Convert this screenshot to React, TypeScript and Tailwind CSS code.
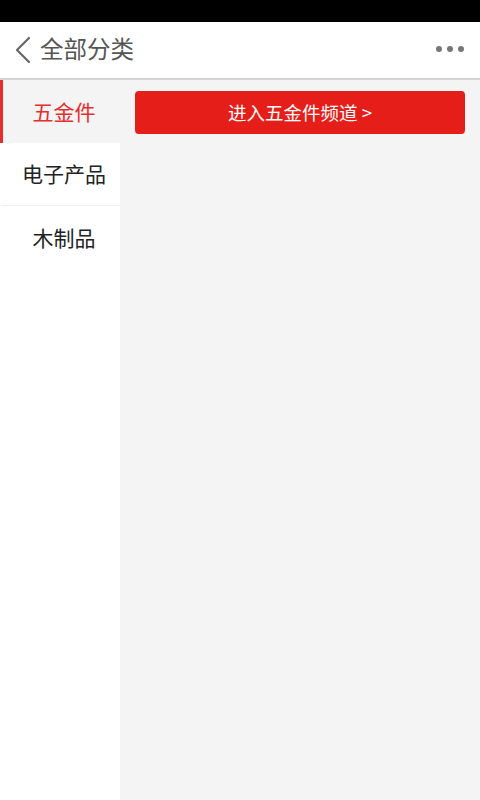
import React, { useState } from 'react';

const categories = ['五金件', '电子产品', '木制品'];

const font = { fontFamily: '"Noto Sans CJK SC", "Noto Sans", sans-serif' };

export default function App() {
    const [active, setActive] = useState(0);

    return (
        <div className="w-[480px] h-[800px] flex flex-col bg-[#f4f4f4] overflow-hidden" style={font}>
            {/* status bar */}
            <div className="h-[22px] bg-black shrink-0" />

            {/* header */}
            <div className="h-[58px] shrink-0 bg-white border-b-2 border-[#d4d4d4] flex items-center justify-between pl-[14px] pr-[16px]">
                <div className="flex items-center gap-[8px]">
                    <svg width="18" height="28" viewBox="0 0 18 28" fill="none">
                        <path d="M15 2 L3 14 L15 26" stroke="#666" strokeWidth="2.2" strokeLinecap="round" strokeLinejoin="round" />
                    </svg>
                    <span className="text-[23.5px] text-[#555] leading-none -mt-[3px]">全部分类</span>
                </div>
                <div className="flex items-center gap-[5px] -mt-[2px]">
                    <span className="w-[6px] h-[6px] rounded-full bg-[#777]" />
                    <span className="w-[6px] h-[6px] rounded-full bg-[#777]" />
                    <span className="w-[6px] h-[6px] rounded-full bg-[#777]" />
                </div>
            </div>

            <div className="flex flex-1 min-h-0">
                {/* sidebar */}
                <div className="w-[120px] shrink-0 bg-white flex flex-col">
                    {categories.map((c, i) => (
                        <button
                            key={c}
                            onClick={() => setActive(i)}
                            className={`h-[63px] flex items-center justify-center pl-[5px] text-[21px] border-l-[3px] ${
                                i === active
                                    ? 'bg-[#f4f4f4] text-[#e52e2e] border-[#e52e2e]'
                                    : 'bg-white text-[#222] border-transparent'
                            } ${i === 1 ? 'border-b border-b-[#f0f0f0]' : ''}`}
                        >
                            {c}
                        </button>
                    ))}
                </div>

                {/* content */}
                <div className="flex-1 bg-[#f4f4f4] pt-[11px] pl-[15px] pr-[15px]">
                    <button className="w-full h-[43px] rounded-[4px] bg-[#e61e1a] text-white text-[18.5px] flex items-center justify-center">
                        进入{categories[active]}频道 &gt;
                    </button>
                </div>
            </div>
        </div>
    );
}
